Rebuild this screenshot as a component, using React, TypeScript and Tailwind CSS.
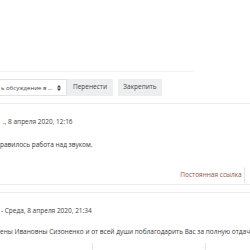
export default function App() {
  return (
    <div className="w-[250px] h-[250px] overflow-hidden bg-white text-[#3a3a3a] text-[6.5px] leading-none whitespace-nowrap font-['Open_Sans',sans-serif]">
      <div className="h-[72px] w-[193px] border-b border-[#f1f1f1]" />
      <div className="mt-[7px] flex items-stretch h-[17px]">
        <div className="w-[67px] flex items-center justify-between border border-l-0 border-[#e3e3e3] pl-[1px] pr-[5px] text-[#444]">
          <span className="text-[6px]">ь обсуждение в ...</span>
          <svg width="4" height="6" viewBox="0 0 4 6" className="shrink-0">
            <path d="M2 0 L4 2.4 L0 2.4 Z M2 6 L4 3.6 L0 3.6 Z" fill="#444" />
          </svg>
        </div>
        <div className="w-[46px] flex items-center justify-center bg-[#edeef0] text-[#444]">Перенести</div>
        <div className="ml-[5px] w-[44px] flex items-center justify-center bg-[#edeef0] text-[#444]">Закрепить</div>
      </div>
      <div className="mt-[7px] h-[82px] border-y border-[#ececec] flex flex-col">
        <div className="mt-[15px] pl-[3px] text-[#444]">., 8 апреля 2020, 12:16</div>
        <div className="mt-[16px] text-[#3a3a3a]">равилось работа над звуком.</div>
        <div className="mt-[19px] flex justify-end">
          <div className="w-[67px] h-[16px] flex items-center justify-center border-r border-[#e6e6e6] text-[#8c5246]">
            Постоянная ссылка
          </div>
          <div className="w-[5px]" />
        </div>
      </div>
      <div className="mt-[7px] border-t border-[#ececec] flex flex-col">
        <div className="mt-[15px] pl-[1px] text-[#444]">- Среда, 8 апреля 2020, 21:34</div>
        <div className="mt-[14px] text-[#3a3a3a]">ены Ивановны Сизоненко и от всей души поблагодарить Вас за полную отдачу</div>
        <div className="mt-[8px] flex h-[10px]">
          <div className="ml-[92px] w-px bg-[#e6e6e6]" />
          <div className="ml-[112px] w-px bg-[#e6e6e6]" />
        </div>
      </div>
    </div>
  );
}
